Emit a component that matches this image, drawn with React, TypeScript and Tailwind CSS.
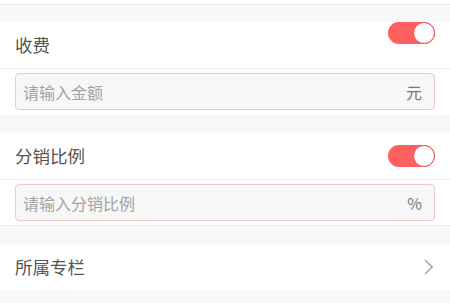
import React from "react";

const font = { fontFamily: '"Noto Sans CJK SC", "Noto Sans", sans-serif' };

function Toggle({ className = "" }: { className?: string }) {
  return (
    <div className={`relative w-[47px] h-[22px] rounded-full bg-[#fe5f5f] ${className}`}>
      <div className="absolute right-0 top-0 w-[22px] h-[22px] rounded-full bg-white border border-[#f05555]" />
    </div>
  );
}

function InputRow({ placeholder, unit, bottomLine }: { placeholder: string; unit: string; bottomLine?: boolean }) {
  return (
    <div className={`bg-white h-[46px] px-[15px] pt-[4px] ${bottomLine ? "border-b border-[#ededed]" : ""}`}>
      <div className="h-[37px] rounded-[4px] border border-[#f5c4c4] bg-[#f7f7f7] flex items-center justify-between pl-[7px] pr-[12px]">
        <span className="text-[16px] text-[#a3a3a3]">{placeholder}</span>
        <span className="text-[16px] text-[#777]">{unit}</span>
      </div>
    </div>
  );
}

export default function App() {
  return (
    <div className="w-[450px] h-[303px] bg-[#f8f8f8] overflow-hidden" style={font}>
      <div className="h-[5px] bg-white border-b border-[#e6e6e6]" />
      <div className="h-[17px]" />
      <div className="bg-white h-[47px] border-b border-[#ececec] flex items-start justify-between pl-[15px] pr-[15px]">
        <span className="text-[17.5px] text-[#555] mt-[12px] leading-[22px]">收费</span>
        <Toggle />
      </div>
      <InputRow placeholder="请输入金额" unit="元" />
      <div className="h-[17px]" />
      <div className="bg-white h-[48px] border-b border-[#ececec] flex items-center justify-between pl-[15px] pr-[15px]">
        <span className="text-[17.5px] text-[#555] leading-[22px]">分销比例</span>
        <Toggle />
      </div>
      <InputRow placeholder="请输入分销比例" unit="%" bottomLine />
      <div className="h-[18px]" />
      <div className="bg-white h-[46px] flex items-center justify-between pl-[15px] pr-[17px]">
        <span className="text-[17.5px] text-[#555] leading-[22px]">所属专栏</span>
        <svg width="9" height="16" viewBox="0 0 9 16" fill="none">
          <path d="M1 1l7 7-7 7" stroke="#aaa" strokeWidth="1.6" />
        </svg>
      </div>
    </div>
  );
}
